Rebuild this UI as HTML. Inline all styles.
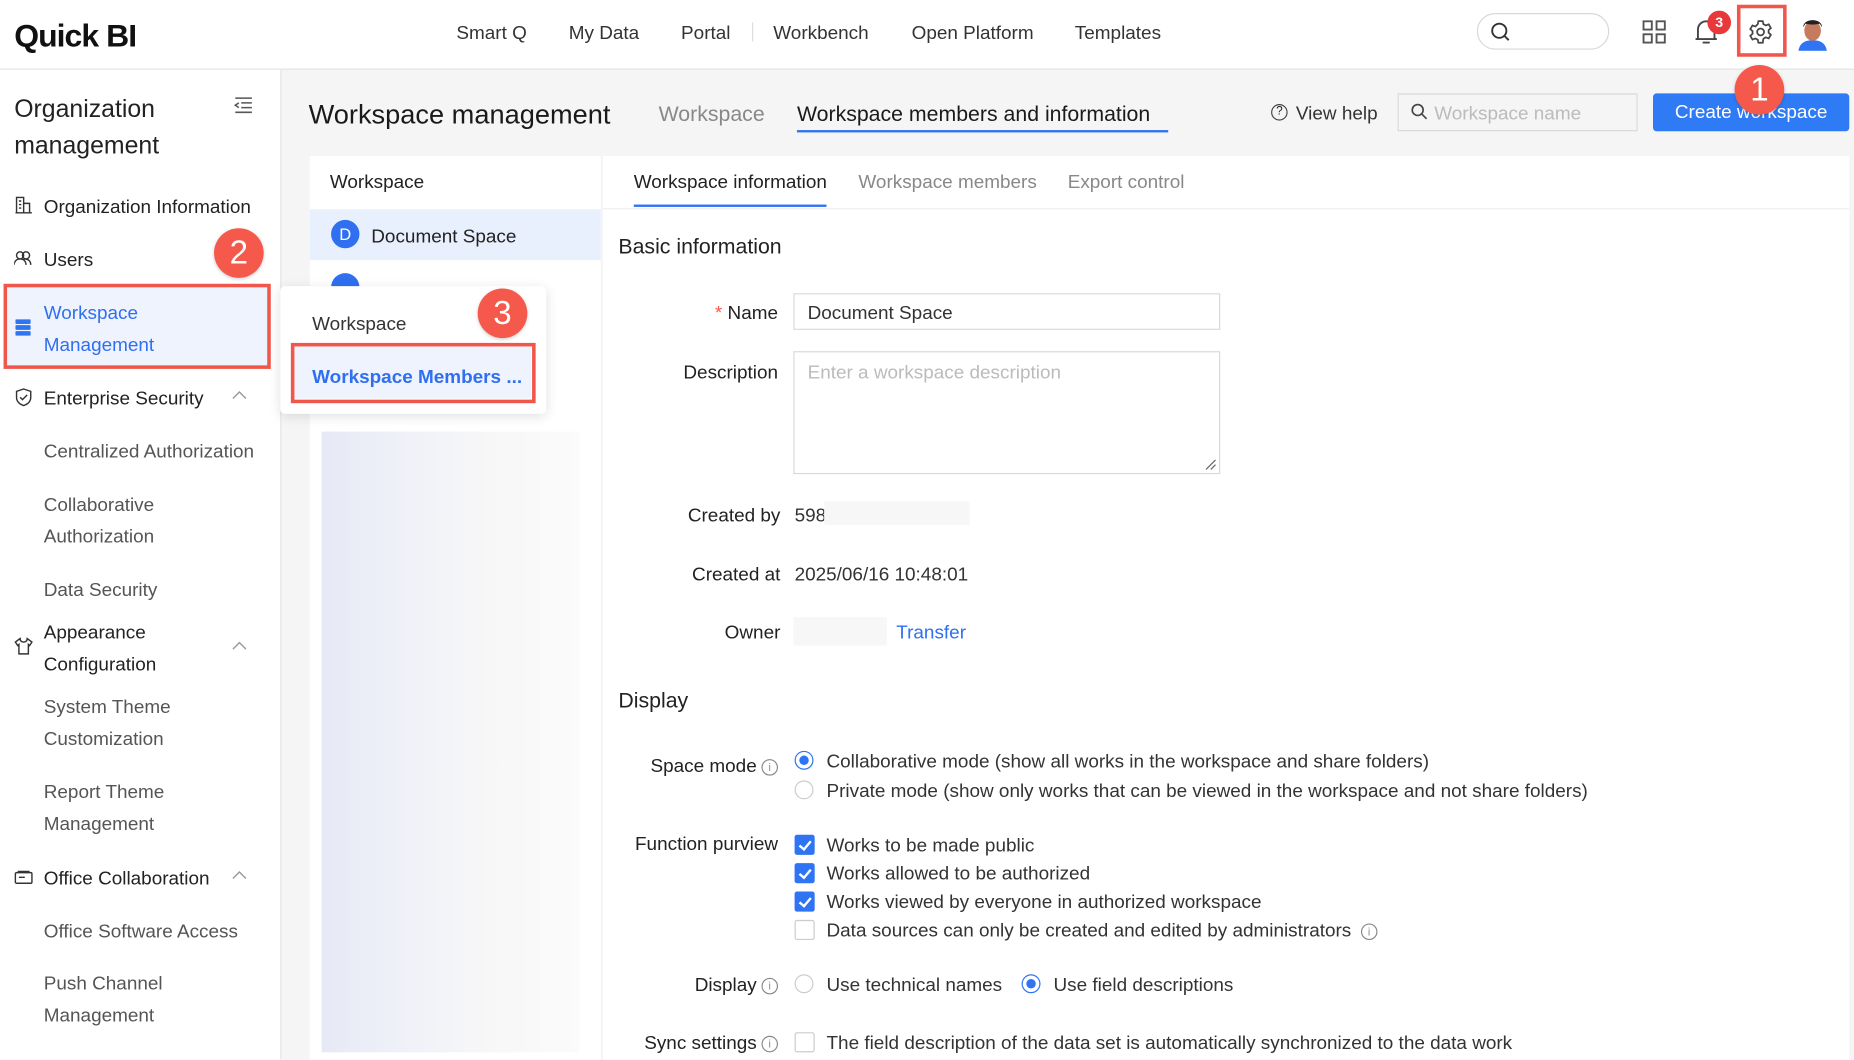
<!DOCTYPE html>
<html><head><meta charset="utf-8"><style>
html,body{margin:0;padding:0;width:1854px;height:1060px;overflow:hidden;background:#f5f5f5}
#s{position:absolute;left:0;top:0;width:1568px;height:896px;transform:scale(1.18240);transform-origin:0 0;font-family:"Liberation Sans",sans-serif;color:#222;font-size:16px}
.a{position:absolute;white-space:nowrap}
.c{transform:translateY(calc(-50% + 2px))}
.lab{position:absolute;text-align:right;width:200px;transform:translateY(calc(-50% + 2px));white-space:nowrap}
.badge{position:absolute;width:42px;height:42px;border-radius:50%;background:#f5594c;color:#fff;font-size:28px;text-align:center;line-height:42px;box-shadow:0 1px 3px rgba(0,0,0,.2)}
.red{position:absolute;border:3px solid #f0564a;box-sizing:border-box}
.radio{position:absolute;width:16px;height:16px;border:1px solid #ccc;border-radius:50%;box-sizing:border-box;background:#fff}
.radio.on{border-color:#2f74f3}
.radio.on::after{content:"";position:absolute;left:3px;top:3px;width:8px;height:8px;border-radius:50%;background:#2f74f3}
.cb{position:absolute;width:17px;height:17px;border:1px solid #ccc;border-radius:2px;box-sizing:border-box;background:#fff}
.cb.on{background:#2f74f3;border-color:#2f74f3}
.cb.on::after{content:"";position:absolute;left:5px;top:2px;width:4px;height:8px;border:solid #fff;border-width:0 2px 2px 0;transform:rotate(40deg)}
.info{display:inline-block;width:12px;height:12px;border:1px solid #888;border-radius:50%;font-size:9px;line-height:12px;text-align:center;color:#888;vertical-align:1px;margin-left:4px}
.sub{color:#555}
</style></head><body><div id="s">
<div class="a" style="left:0;top:0;width:1568px;height:58px;background:#fff;border-bottom:1px solid #e2e2e2"></div>
<div class="a c" style="left:12px;top:29px;font-size:27px;font-weight:bold;color:#111;letter-spacing:-0.8px">Quick BI</div>
<div class="a c" style="left:386px;top:27px;color:#333">Smart Q</div>
<div class="a c" style="left:481px;top:27px;color:#333">My Data</div>
<div class="a c" style="left:576px;top:27px;color:#333">Portal</div>
<div class="a" style="left:636px;top:19px;width:1px;height:16px;background:#ddd"></div>
<div class="a c" style="left:654px;top:27px;color:#333">Workbench</div>
<div class="a c" style="left:771px;top:27px;color:#333">Open Platform</div>
<div class="a c" style="left:909px;top:27px;color:#333">Templates</div>
<div class="a" style="left:1249px;top:11px;width:112px;height:31px;border:1px solid #d8d8d8;border-radius:16px;box-sizing:border-box"></div>
<svg class="a" style="left:1260px;top:18px" width="18" height="18" viewBox="0 0 18 18"><circle cx="8" cy="8" r="6" fill="none" stroke="#333" stroke-width="1.6"/><path d="M12.5 12.5l3.5 3.5" stroke="#333" stroke-width="1.6"/></svg>
<svg class="a" style="left:1389px;top:17px" width="20" height="20" viewBox="0 0 20 20" fill="none" stroke="#555" stroke-width="1.6"><rect x="1" y="1" width="7" height="7"/><rect x="12" y="1" width="7" height="7"/><rect x="1" y="12" width="7" height="7"/><rect x="12" y="12" width="7" height="7"/></svg>
<svg class="a" style="left:1433px;top:15px" width="20" height="24" viewBox="0 0 20 24" fill="none" stroke="#444" stroke-width="1.6"><path d="M3 18V10a7 7 0 0114 0v8zM1 18h18M7 21h6"/></svg>
<div class="a" style="left:1444px;top:9px;width:20px;height:20px;border-radius:50%;background:#e8383a;color:#fff;font-size:12px;font-weight:bold;text-align:center;line-height:20px">3</div>
<svg class="a" style="left:1478px;top:16px" width="22" height="22" viewBox="0 0 24 24" fill="none" stroke="#444" stroke-width="1.6"><circle cx="12" cy="12" r="3.2"/><path d="M10 2h4l.6 2.8 2.2 1.2 2.7-1 2 3.4-2.1 1.9v2.4l2.1 1.9-2 3.4-2.7-1-2.2 1.2L14 22h-4l-.6-2.8-2.2-1.2-2.7 1-2-3.4 2.1-1.9V11.3L2.5 9.4l2-3.4 2.7 1L9.4 4.8z"/></svg>
<div class="red" style="left:1469px;top:4px;width:42px;height:44px"></div>
<svg class="a" style="left:1518px;top:11px" width="30" height="32" viewBox="0 0 30 32"><path d="M3 32c1-7 6-9 12-9s11 2 12 9z" fill="#2f74f3"/><ellipse cx="15" cy="15" rx="7" ry="8.5" fill="#c57b5d"/><path d="M7 12c0-8 16-8 16 0l-2-3c-3 1-9 1-12 0z" fill="#222"/></svg>
<div class="a" style="left:0;top:59px;width:237px;height:837px;background:#fff;border-right:1px solid #e4e4e4"></div>
<div class="a" style="left:12px;top:77px;font-size:21px;line-height:31px;color:#222">Organization<br>management</div>
<svg class="a" style="left:198px;top:82px" width="16" height="14" viewBox="0 0 16 14" stroke="#555" stroke-width="1.3" fill="none"><path d="M1 1h14M6 5h9M6 9h9M1 13h14M4 5L1 7l3 2"/></svg>
<svg class="a" style="left:13px;top:166px" width="14" height="15" viewBox="0 0 14 15" fill="none" stroke="#333" stroke-width="1.2"><path d="M1 14V1h6v13M7 6h5v8M0 14h14M3 4h2M3 7h2M3 10h2"/></svg>
<div class="a c" style="left:37px;top:174px">Organization Information</div>
<svg class="a" style="left:12px;top:212px" width="15" height="13" viewBox="0 0 15 13" fill="none" stroke="#333" stroke-width="1.2"><circle cx="5" cy="4" r="3"/><circle cx="10" cy="4" r="3"/><path d="M0 12c0-3 2-5 5-5s5 2 5 5M8 7c3 0 6 1 6 5"/></svg>
<div class="a c" style="left:37px;top:219px">Users</div>
<div class="a" style="left:6px;top:243px;width:220px;height:66px;background:#eef3fe"></div>
<svg class="a" style="left:13px;top:270px" width="13" height="14" viewBox="0 0 13 14" fill="#2f74f3"><rect x="0" y="0" width="13" height="4" rx="1"/><rect x="0" y="5" width="13" height="4" rx="1"/><rect x="0" y="10" width="13" height="4" rx="1"/></svg>
<div class="a" style="left:37px;top:252px;line-height:27px;color:#2f6ff0">Workspace<br>Management</div>
<div class="red" style="left:3px;top:240px;width:226px;height:72px"></div>
<div class="badge" style="left:181px;top:193px">2</div>
<svg class="a" style="left:13px;top:328px" width="14" height="16" viewBox="0 0 14 16" fill="none" stroke="#333" stroke-width="1.2"><path d="M7 1l6 2v5c0 4-3 6-6 7-3-1-6-3-6-7V3zM4 8l2 2 4-4"/></svg>
<div class="a c" style="left:37px;top:336px">Enterprise Security</div>
<svg class="a" style="left:196px;top:330px" width="13" height="8" viewBox="0 0 13 8" fill="none" stroke="#999" stroke-width="1.2"><path d="M1 7l5.5-5.5L12 7"/></svg>
<div class="a c sub" style="left:37px;top:381px">Centralized Authorization</div>
<div class="a sub" style="left:37px;top:414px;line-height:27px">Collaborative<br>Authorization</div>
<div class="a c sub" style="left:37px;top:498px">Data Security</div>
<svg class="a" style="left:12px;top:539px" width="16" height="15" viewBox="0 0 16 15" fill="none" stroke="#333" stroke-width="1.2"><path d="M5 1L1 4l2 3 1-1v8h8V6l1 1 2-3-4-3c0 2-1 3-3 3S5 3 5 1z"/></svg>
<div class="a" style="left:37px;top:522px;line-height:27px">Appearance<br>Configuration</div>
<svg class="a" style="left:196px;top:542px" width="13" height="8" viewBox="0 0 13 8" fill="none" stroke="#999" stroke-width="1.2"><path d="M1 7l5.5-5.5L12 7"/></svg>
<div class="a sub" style="left:37px;top:585px;line-height:27px">System Theme<br>Customization</div>
<div class="a sub" style="left:37px;top:657px;line-height:27px">Report Theme<br>Management</div>
<svg class="a" style="left:12px;top:736px" width="16" height="12" viewBox="0 0 16 12" fill="none" stroke="#333" stroke-width="1.2"><rect x="1" y="2" width="14" height="9" rx="1"/><path d="M3 1h10M4 6h5"/></svg>
<div class="a c" style="left:37px;top:742px">Office Collaboration</div>
<svg class="a" style="left:196px;top:736px" width="13" height="8" viewBox="0 0 13 8" fill="none" stroke="#999" stroke-width="1.2"><path d="M1 7l5.5-5.5L12 7"/></svg>
<div class="a c sub" style="left:37px;top:787px">Office Software Access</div>
<div class="a sub" style="left:37px;top:819px;line-height:27px">Push Channel<br>Management</div>
<div class="a c" style="left:261px;top:95px;font-size:23px;color:#1a1a1a">Workspace management</div>
<div class="a c" style="left:557px;top:95px;font-size:18px;color:#888">Workspace</div>
<div class="a c" style="left:674px;top:95px;font-size:18px;color:#1a1a1a">Workspace members and information</div>
<div class="a" style="left:674px;top:110px;width:314px;height:2px;background:#2f74f3"></div>
<div class="a" style="left:1075px;top:88px;width:12px;height:12px;border:1px solid #444;border-radius:50%;font-size:10px;line-height:12px;text-align:center">?</div>
<div class="a c" style="left:1096px;top:95px;color:#333">View help</div>
<div class="a" style="left:1182px;top:79px;width:203px;height:32px;border:1px solid #d9d9d9;box-sizing:border-box;background:#f5f5f5"></div>
<svg class="a" style="left:1193px;top:87px" width="15" height="15" viewBox="0 0 15 15"><circle cx="6" cy="6" r="4.6" fill="none" stroke="#444" stroke-width="1.4"/><path d="M9.5 9.5l4 4" stroke="#444" stroke-width="1.4"/></svg>
<div class="a c" style="left:1213px;top:95px;color:#bbb">Workspace name</div>
<div class="a" style="left:1398px;top:79px;width:166px;height:32px;background:#2f7bf5;border-radius:3px;color:#fff;text-align:center;line-height:34px">Create workspace</div>
<div class="badge" style="left:1467px;top:55px">1</div>
<div class="a" style="left:262px;top:132px;width:246px;height:764px;background:#fff"></div>
<div class="a c" style="left:279px;top:153px">Workspace</div>
<div class="a" style="left:262px;top:177px;width:246px;height:43px;background:#e9f0fd"></div>
<div class="a" style="left:280px;top:186px;width:24px;height:24px;border-radius:50%;background:#2f6ff0;color:#fff;font-size:14px;text-align:center;line-height:24px">D</div>
<div class="a c" style="left:314px;top:199px">Document Space</div>
<div class="a" style="left:280px;top:231px;width:24px;height:24px;border-radius:50%;background:#2f6ff0"></div>
<div class="a" style="left:272px;top:365px;width:218px;height:525px;background:linear-gradient(90deg,#e6e9f6 0%,#eff1f8 30%,#f7f7f8 65%,#fbfbfb 100%)"></div>
<div class="a" style="left:237px;top:242px;width:225px;height:108px;background:#fff;border-radius:4px;box-shadow:0 2px 10px rgba(0,0,0,.12)"></div>
<div class="a c" style="left:264px;top:273px;color:#333">Workspace</div>
<div class="a" style="left:249px;top:293px;width:200px;height:44px;background:#eef3fe"></div>
<div class="a c" style="left:264px;top:318px;color:#2f6ff0;font-weight:bold">Workspace Members ...</div>
<div class="red" style="left:246px;top:290px;width:207px;height:51px"></div>
<div class="badge" style="left:404px;top:244px">3</div>
<div class="a" style="left:510px;top:132px;width:1054px;height:764px;background:#fff"></div>
<div class="a" style="left:510px;top:176px;width:1054px;height:1px;background:#eee"></div>
<div class="a c" style="left:536px;top:153px">Workspace information</div>
<div class="a" style="left:536px;top:173px;width:163px;height:2px;background:#2f74f3"></div>
<div class="a c" style="left:726px;top:153px;color:#888">Workspace members</div>
<div class="a c" style="left:903px;top:153px;color:#888">Export control</div>
<div class="a c" style="left:523px;top:207px;font-size:18px">Basic information</div>
<div class="lab" style="left:458px;top:264px"><span style="color:#f5594c">* </span>Name</div>
<div class="a" style="left:671px;top:248px;width:361px;height:31px;border:1px solid #d9d9d9;box-sizing:border-box"></div>
<div class="a c" style="left:683px;top:264px;color:#333">Document Space</div>
<div class="lab" style="left:458px;top:314px">Description</div>
<div class="a" style="left:671px;top:297px;width:361px;height:104px;border:1px solid #d9d9d9;box-sizing:border-box"></div>
<div class="a c" style="left:683px;top:314px;color:#bbb">Enter a workspace description</div>
<svg class="a" style="left:1019px;top:388px" width="10" height="10"><path d="M1 9L9 1M5 9L9 5" stroke="#666"/></svg>
<div class="lab" style="left:460px;top:435px">Created by</div>
<div class="a c" style="left:672px;top:435px;color:#333">598</div>
<div class="a" style="left:697px;top:424px;width:123px;height:20px;background:#f7f7f7"></div>
<div class="lab" style="left:460px;top:485px">Created at</div>
<div class="a c" style="left:672px;top:485px;color:#333">2025/06/16 10:48:01</div>
<div class="lab" style="left:460px;top:534px">Owner</div>
<div class="a" style="left:671px;top:522px;width:79px;height:24px;background:#f7f7f7"></div>
<div class="a c" style="left:758px;top:534px;color:#2f6ff0">Transfer</div>
<div class="a c" style="left:523px;top:591px;font-size:18px">Display</div>
<div class="lab" style="left:458px;top:647px">Space mode<span class="info">i</span></div>
<div class="radio on" style="left:672px;top:635px"></div>
<div class="a c" style="left:699px;top:643px;color:#333">Collaborative mode (show all works in the workspace and share folders)</div>
<div class="radio" style="left:672px;top:660px"></div>
<div class="a c" style="left:699px;top:668px;color:#333">Private mode (show only works that can be viewed in the workspace and not share folders)</div>
<div class="lab" style="left:458px;top:713px">Function purview</div>
<div class="cb on" style="left:672px;top:706px"></div>
<div class="a c" style="left:699px;top:714px;color:#333">Works to be made public</div>
<div class="cb on" style="left:672px;top:730px"></div>
<div class="a c" style="left:699px;top:738px;color:#333">Works allowed to be authorized</div>
<div class="cb on" style="left:672px;top:754px"></div>
<div class="a c" style="left:699px;top:762px;color:#333">Works viewed by everyone in authorized workspace</div>
<div class="cb" style="left:672px;top:778px"></div>
<div class="a c" style="left:699px;top:786px;color:#333">Data sources can only be created and edited by administrators<span class="info" style="margin-left:8px">i</span></div>
<div class="lab" style="left:458px;top:832px">Display<span class="info">i</span></div>
<div class="radio" style="left:672px;top:824px"></div>
<div class="a c" style="left:699px;top:832px;color:#333">Use technical names</div>
<div class="radio on" style="left:864px;top:824px"></div>
<div class="a c" style="left:891px;top:832px;color:#333">Use field descriptions</div>
<div class="lab" style="left:458px;top:881px">Sync settings<span class="info">i</span></div>
<div class="cb" style="left:672px;top:873px"></div>
<div class="a c" style="left:699px;top:881px;color:#333">The field description of the data set is automatically synchronized to the data work</div>
</div></body></html>
